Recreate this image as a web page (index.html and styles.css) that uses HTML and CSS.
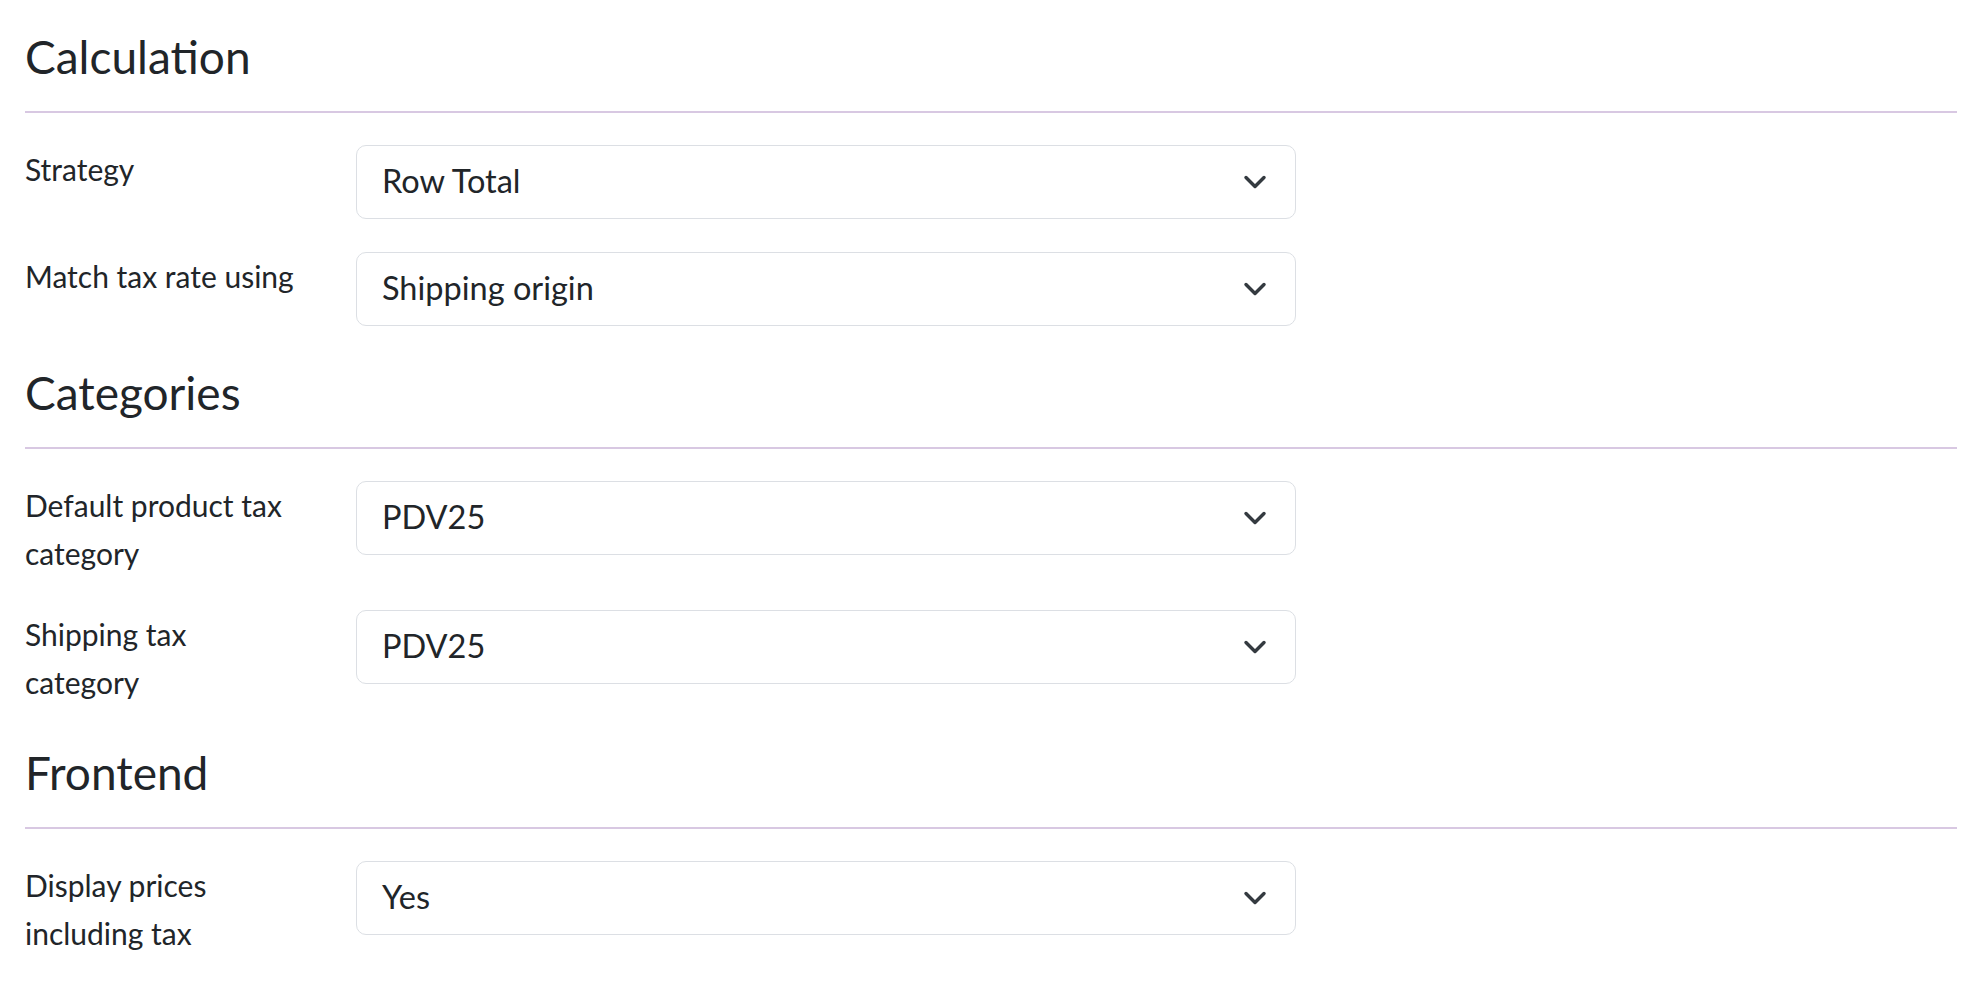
FILE: index.html
```html
<!DOCTYPE html>
<html lang="en">
<head>
<meta charset="utf-8">
<title>Tax settings</title>
<link rel="stylesheet" href="styles.css">
</head>
<body>
<main class="page">
  <section class="section">
    <h2 class="section-title">Calculation</h2>
    <div class="form-rows">
      <div class="form-row">
        <label class="form-label">Strategy</label>
        <div class="select"><span class="select-value">Row Total</span><svg class="chevron" viewBox="0 0 16 16" width="24" height="24"><path d="M2 5l6 6 6-6"/></svg></div>
      </div>
      <div class="form-row">
        <label class="form-label">Match tax rate using</label>
        <div class="select"><span class="select-value">Shipping origin</span><svg class="chevron" viewBox="0 0 16 16" width="24" height="24"><path d="M2 5l6 6 6-6"/></svg></div>
      </div>
    </div>
  </section>
  <section class="section">
    <h2 class="section-title">Categories</h2>
    <div class="form-rows">
      <div class="form-row">
        <label class="form-label">Default product tax<br>category</label>
        <div class="select"><span class="select-value">PDV25</span><svg class="chevron" viewBox="0 0 16 16" width="24" height="24"><path d="M2 5l6 6 6-6"/></svg></div>
      </div>
      <div class="form-row">
        <label class="form-label">Shipping tax<br>category</label>
        <div class="select"><span class="select-value">PDV25</span><svg class="chevron" viewBox="0 0 16 16" width="24" height="24"><path d="M2 5l6 6 6-6"/></svg></div>
      </div>
    </div>
  </section>
  <section class="section">
    <h2 class="section-title">Frontend</h2>
    <div class="form-rows">
      <div class="form-row">
        <label class="form-label">Display prices<br>including tax</label>
        <div class="select"><span class="select-value">Yes</span><svg class="chevron" viewBox="0 0 16 16" width="24" height="24"><path d="M2 5l6 6 6-6"/></svg></div>
      </div>
    </div>
  </section>
</main>
</body>
</html>
```
FILE: styles.css
```css
html, body {
  margin: 0;
  padding: 0;
  background: #ffffff;
}

body {
  font-family: "Lato", "Noto Sans", sans-serif;
  color: #212529;
}

.page {
  padding: 29px 21px 0 25px;
}

.section + .section {
  margin-top: 39px;
}

.section-title {
  margin: 0;
  font-size: 46px;
  font-weight: 400;
  line-height: 56px;
  padding-bottom: 26px;
  border-bottom: 2px solid #d8c8e2;
}

.form-rows {
  display: flex;
  flex-direction: column;
  gap: 33px;
  margin-top: 32px;
}

.form-row {
  display: grid;
  grid-template-columns: 331px 940px;
  align-items: start;
}

.form-label {
  font-size: 30px;
  line-height: 48px;
}

.select {
  box-sizing: border-box;
  height: 74px;
  border: 1.5px solid #dcdfe4;
  border-radius: 10px;
  display: flex;
  align-items: center;
  justify-content: space-between;
  padding: 0 28px 4px 25px;
}

.select-value {
  font-size: 32.5px;
  line-height: normal;
}

.chevron {
  display: block;
  margin-top: 4px;
  fill: none;
  stroke: #343a40;
  stroke-width: 2.3;
  stroke-linecap: round;
  stroke-linejoin: round;
}
```
